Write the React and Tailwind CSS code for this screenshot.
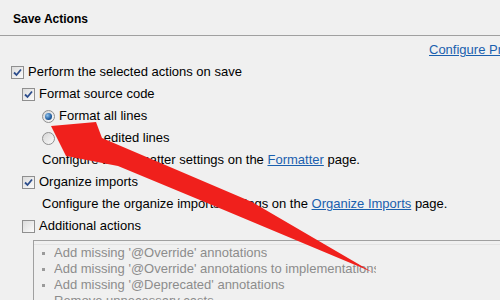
import React from "react";

const FONT = { fontFamily: '"Liberation Sans", Arial, sans-serif' };

function Check({ checked }) {
  return (
    <span className="inline-flex h-[13px] w-[13px] shrink-0 items-center justify-center border border-[#8f8f8f] bg-gradient-to-br from-[#dcdcdc] to-[#fbfbfb]">
      {checked && (
        <svg width="9" height="9" viewBox="0 0 9 9">
          <path d="M1 4.5 L3.5 7 L8 1.5" fill="none" stroke="#2c4d8c" strokeWidth="1.8" />
        </svg>
      )}
    </span>
  );
}

function Radio({ checked }) {
  return (
    <span className="inline-flex h-[13px] w-[13px] shrink-0 items-center justify-center rounded-full border border-[#8f8f8f] bg-gradient-to-br from-[#d6d6d6] to-[#fbfbfb]">
      {checked && (
        <span className="h-[7px] w-[7px] rounded-full bg-[radial-gradient(circle_at_35%_35%,#8fc3ee,#1f5b9e_60%,#123d6e)]" />
      )}
    </span>
  );
}

function Row({ indent, children }) {
  return (
    <div className={`flex h-[22px] items-center gap-[4px] whitespace-nowrap ${indent}`}>
      {children}
    </div>
  );
}

const items = [
  "Add missing '@Override' annotations",
  "Add missing '@Override' annotations to implementations of interface methods",
  "Add missing '@Deprecated' annotations",
  "Remove unnecessary casts",
];

export default function App() {
  return (
    <div
      className="relative h-[300px] w-[500px] overflow-hidden bg-[#f0f0f0] text-[13px] text-black"
      style={FONT}
    >
      {/* header */}
      <div className="flex h-[35px] items-center pl-[13px] pt-[3px] text-[12px] font-bold">
        Save Actions
      </div>
      <div className="h-px bg-[#a0a0a0]" />

      <div className="flex h-[25px] items-center whitespace-nowrap pl-[429px] pt-[3px]">
        <span className="text-[#1a5fae] underline">Configure Project Specific Settings...</span>
      </div>

      <Row indent="pl-[11px]">
        <Check checked />
        <span>Perform the selected actions on save</span>
      </Row>
      <Row indent="pl-[22px]">
        <Check checked />
        <span>Format source code</span>
      </Row>
      <Row indent="pl-[42px]">
        <Radio checked />
        <span>Format all lines</span>
      </Row>
      <Row indent="pl-[42px]">
        <Radio />
        <span>Format edited lines</span>
      </Row>
      <Row indent="pl-[42px]">
        <span>
          Configure the formatter settings on the{" "}
          <span className="text-[#1a5fae] underline">Formatter</span> page.
        </span>
      </Row>
      <Row indent="pl-[22px]">
        <Check checked />
        <span>Organize imports</span>
      </Row>
      <Row indent="pl-[42px]">
        <span>
          Configure the organize imports settings on the{" "}
          <span className="text-[#1a5fae] underline">Organize Imports</span> page.
        </span>
      </Row>
      <Row indent="pl-[22px]">
        <Check />
        <span>Additional actions</span>
      </Row>

      {/* disabled list */}
      <div className="ml-[33px] mt-[3px] border-l border-t border-[#a0a0a0] pt-[3px] text-[#8c8c8c]">
        <div className="border-t border-[#e3e3e3]" />
        {items.map((t) => (
          <div key={t} className="flex h-[16px] items-center whitespace-nowrap pl-[8px]">
            <span className="mr-[9px] h-[3px] w-[3px] shrink-0 bg-[#9a9a9a]" />
            <span className="block max-w-[322px] overflow-hidden">{t}</span>
          </div>
        ))}
      </div>

      {/* red annotation arrow */}
      <svg className="pointer-events-none absolute left-0 top-0" width="500" height="300">
        <polygon
          points="51,126 96,122 102,138 252,202 372,272 224,210 118,166 66,156"
          fill="#f0201c"
        />
      </svg>
    </div>
  );
}
